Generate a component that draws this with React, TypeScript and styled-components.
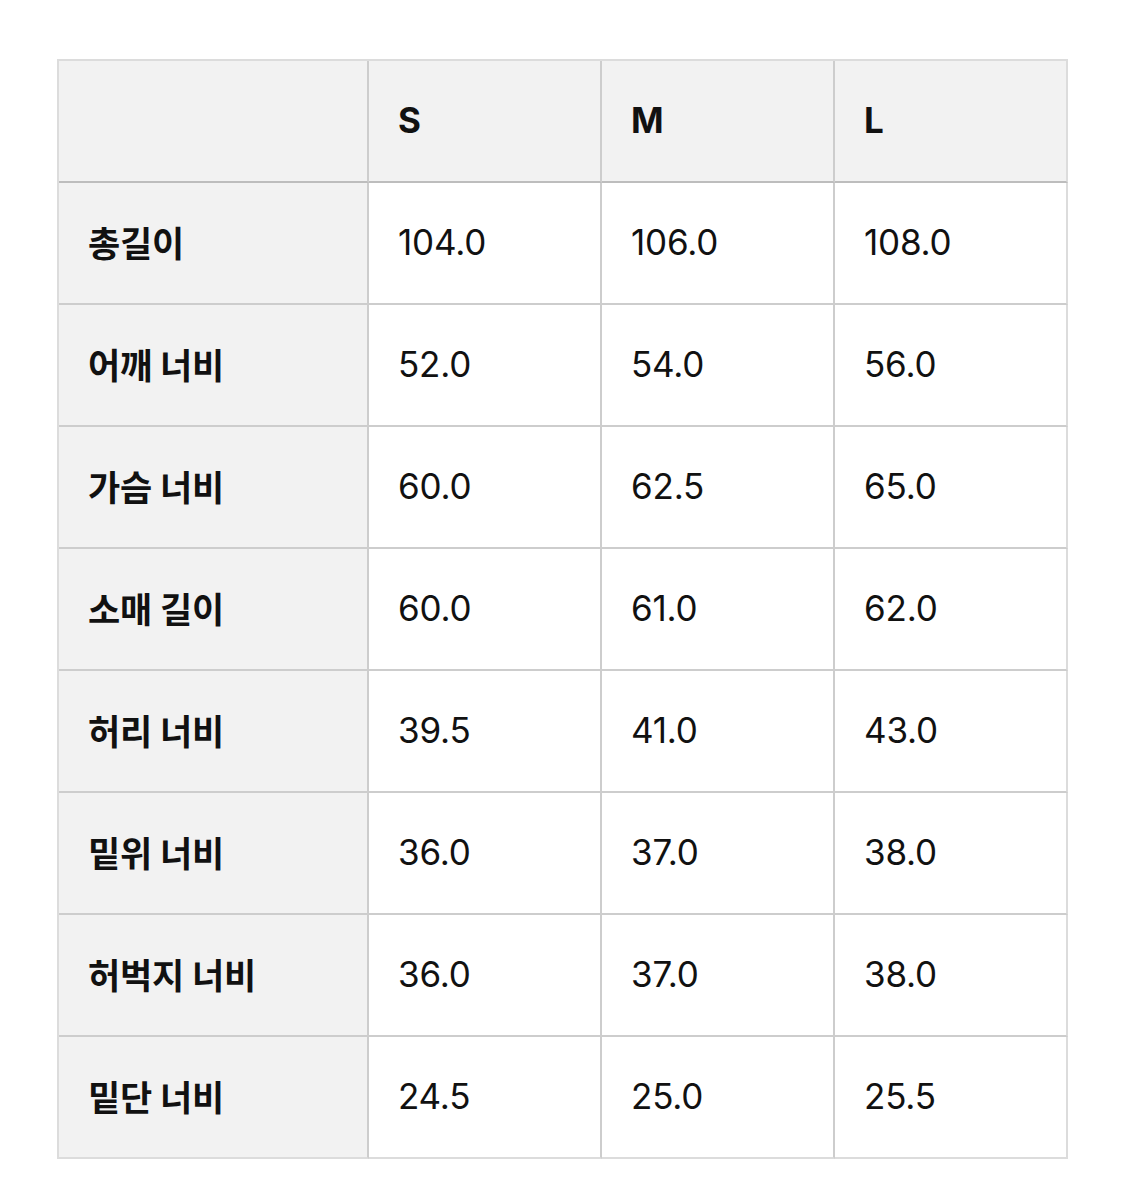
import React from 'react';
import {styled, createGlobalStyle} from 'styled-components';

const sizes = ['S', 'M', 'L'];

const rows: Array<{label: string; values: string[]}> = [
  {label: '총길이', values: ['104.0', '106.0', '108.0']},
  {label: '어깨 너비', values: ['52.0', '54.0', '56.0']},
  {label: '가슴 너비', values: ['60.0', '62.5', '65.0']},
  {label: '소매 길이', values: ['60.0', '61.0', '62.0']},
  {label: '허리 너비', values: ['39.5', '41.0', '43.0']},
  {label: '밑위 너비', values: ['36.0', '37.0', '38.0']},
  {label: '허벅지 너비', values: ['36.0', '37.0', '38.0']},
  {label: '밑단 너비', values: ['24.5', '25.0', '25.5']},
];

const GlobalStyle = createGlobalStyle`
  html, body {
    margin: 0;
    padding: 0;
    background: #ffffff;
  }
  body {
    font-family: Inter, 'Noto Sans CJK KR', sans-serif;
    color: #111111;
  }
`;

const Page = styled.div`
  padding: 59px 0 0 57px;
`;

const Grid = styled.div`
  display: grid;
  grid-template-columns: 310px 233px 233px 233px;
  grid-auto-rows: 122px;
  width: max-content;
  border-top: 2px solid #dcdcdc;
  border-left: 2px solid #dcdcdc;
`;

const Cell = styled.div<{$bold?: boolean; $shade?: boolean; $head?: boolean; $lastCol?: boolean; $lastRow?: boolean}>`
  box-sizing: border-box;
  display: flex;
  align-items: center;
  padding: 0 0 3px 29px;
  border-right: 2px solid ${(p) => (p.$lastCol ? '#dcdcdc' : '#cdcdcd')};
  border-bottom: 2px solid
    ${(p) => (p.$head ? '#bdbdbd' : p.$lastRow ? '#dcdcdc' : '#cdcdcd')};
  background: ${(p) => (p.$shade ? '#f2f2f2' : '#ffffff')};
  font-size: 35px;
  font-weight: ${(p) => (p.$bold ? 700 : 400)};
  letter-spacing: -0.2px;
  white-space: nowrap;
`;

const App = () => (
  <>
    <GlobalStyle />
    <Page>
      <Grid>
        <Cell $shade $head />
        {sizes.map((s, i) => (
          <Cell key={s} $bold $shade $head $lastCol={i === sizes.length - 1}>
            {s}
          </Cell>
        ))}
        {rows.map(({label, values}, r) => {
          const lastRow = r === rows.length - 1;
          return (
            <React.Fragment key={label}>
              <Cell $bold $shade $lastRow={lastRow}>
                {label}
              </Cell>
              {values.map((v, i) => (
                <Cell key={i} $lastRow={lastRow} $lastCol={i === values.length - 1}>
                  {v}
                </Cell>
              ))}
            </React.Fragment>
          );
        })}
      </Grid>
    </Page>
  </>
);

export default App;
